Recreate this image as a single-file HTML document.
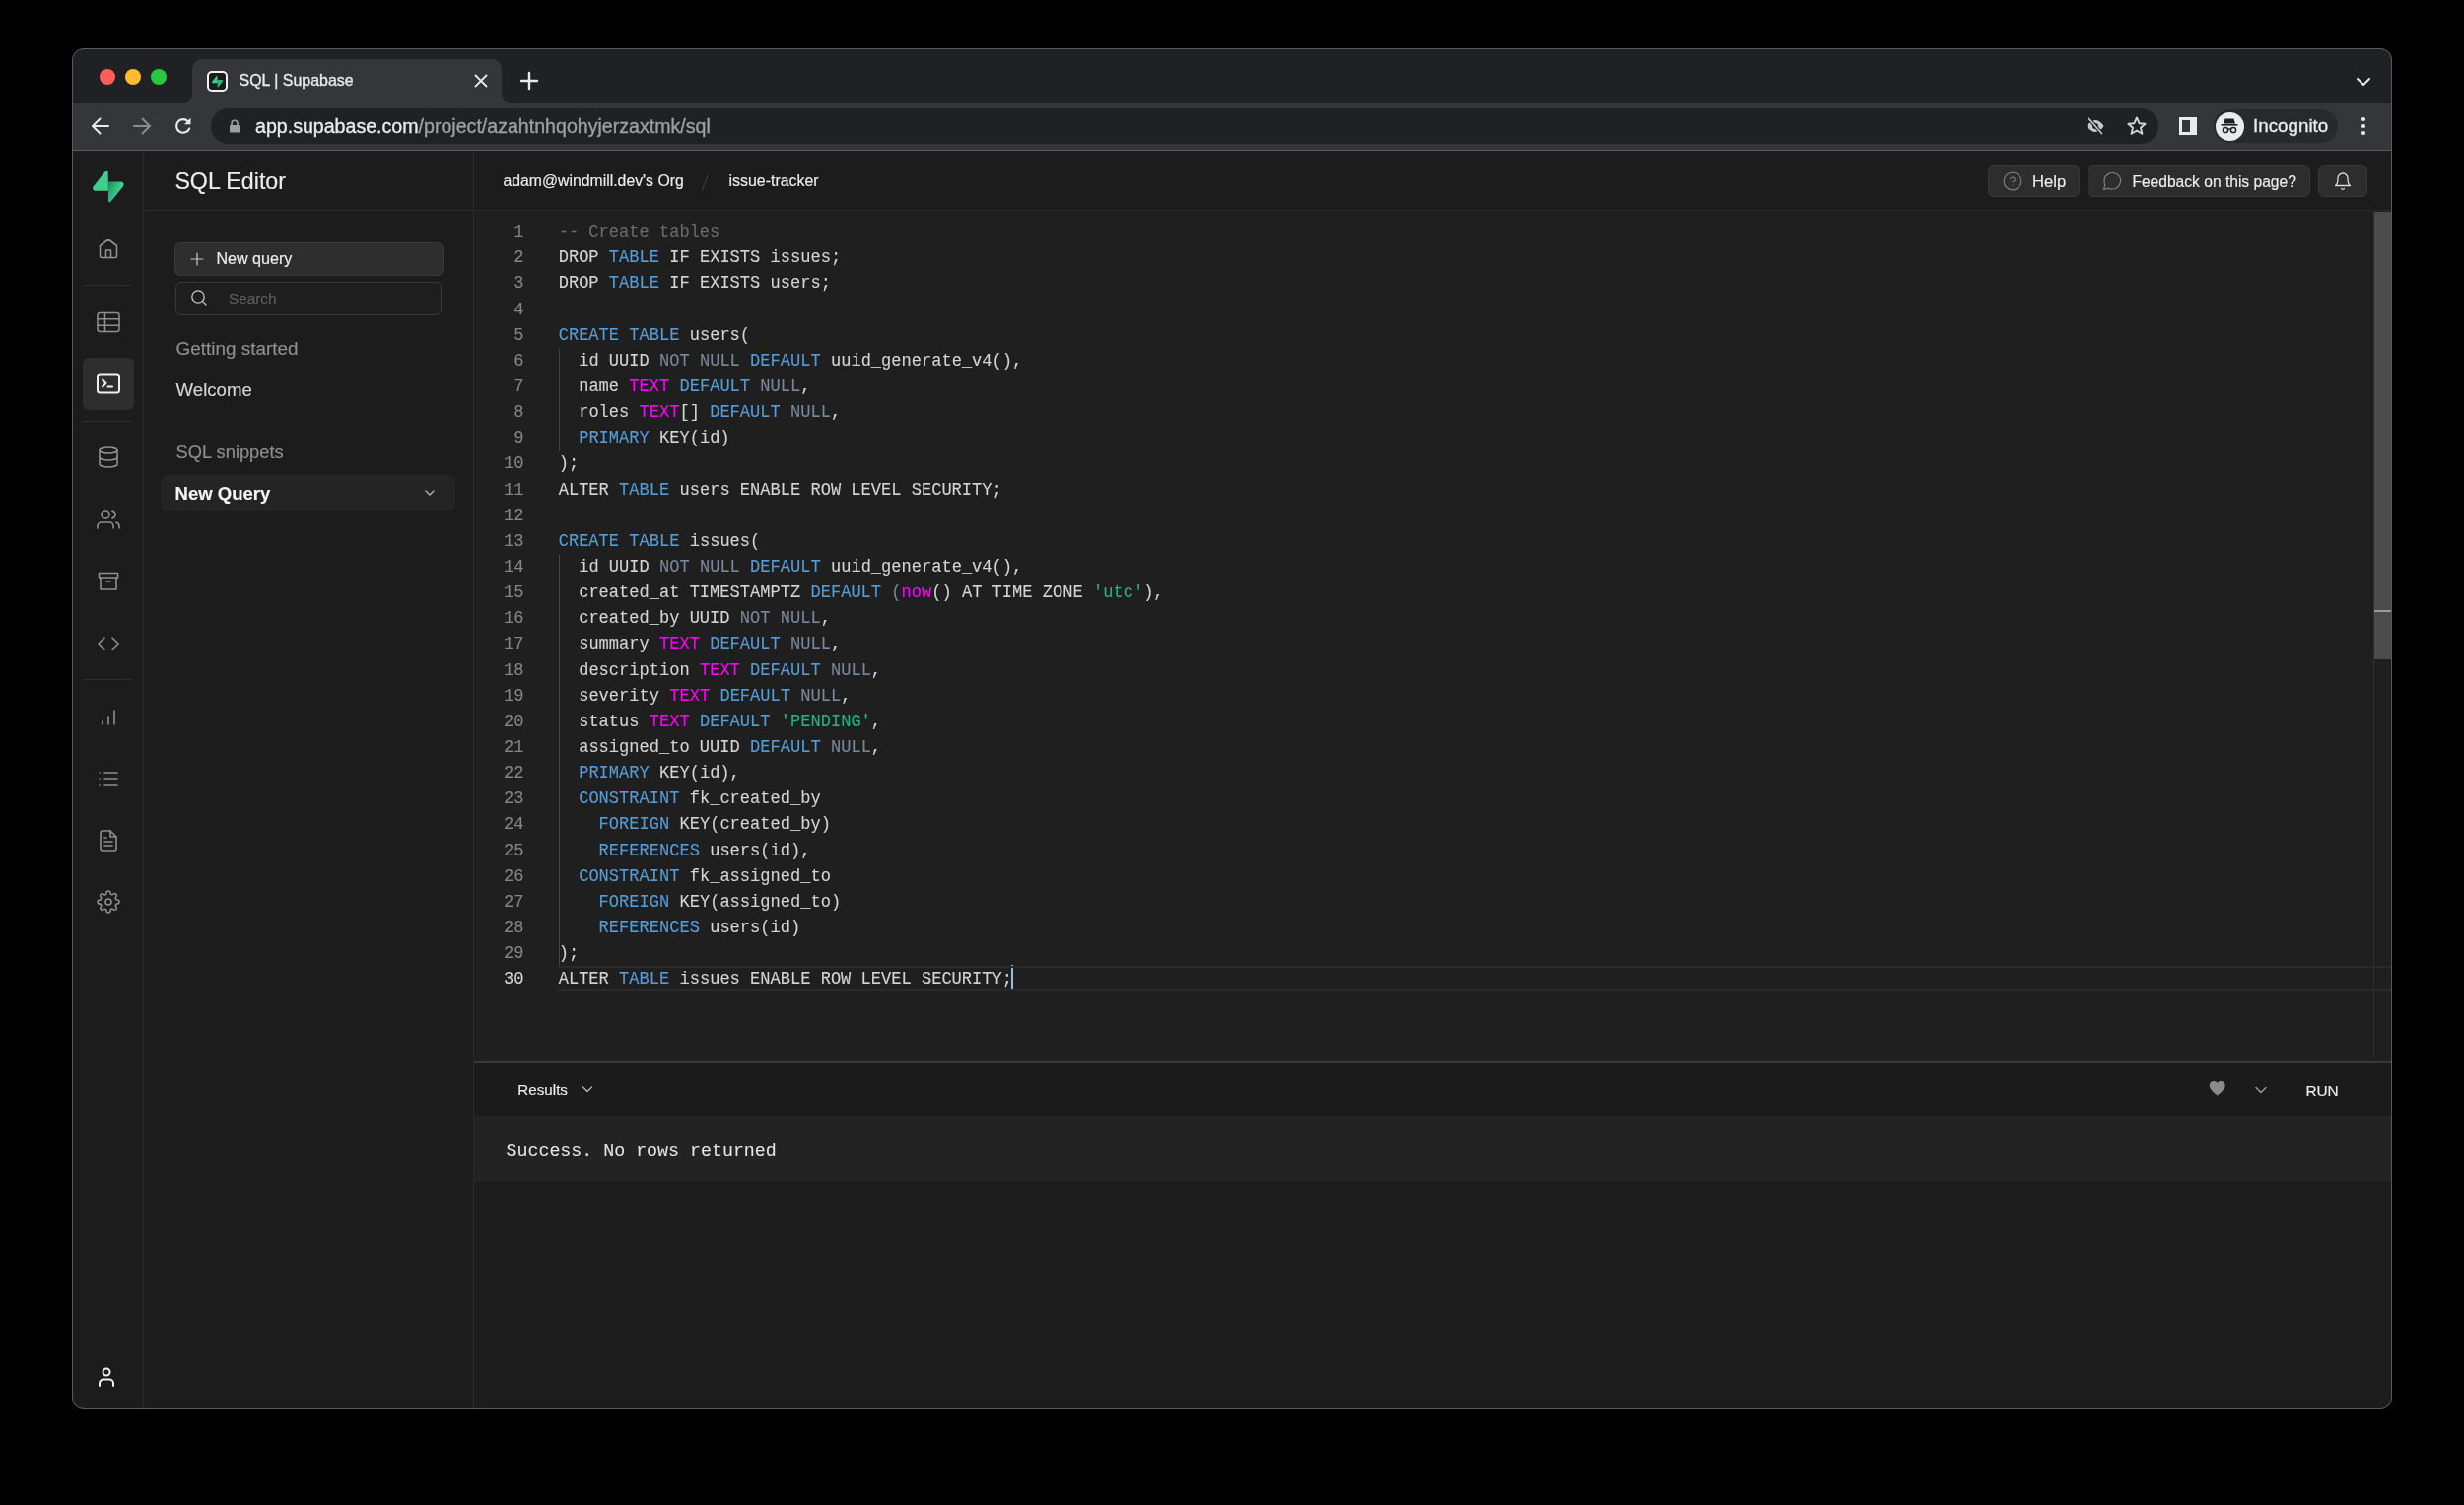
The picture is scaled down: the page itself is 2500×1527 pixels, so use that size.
<!DOCTYPE html><html><head><meta charset="utf-8"><title>SQL | Supabase</title><style>
html,body{margin:0;padding:0;background:#000;}
body{width:2500px;height:1527px;position:relative;overflow:hidden;font-family:"Liberation Sans",sans-serif;}
.a{position:absolute;}
#win{position:absolute;left:73px;top:49px;width:2354px;height:1381px;border-radius:12px;overflow:hidden;background:#1c1c1c;}
#inner{position:absolute;left:-73px;top:-49px;width:2500px;height:1527px;}
#border{position:absolute;left:73px;top:49px;width:2354px;height:1381px;border-radius:12px;box-sizing:border-box;border:1px solid #5b5b5d;}
svg{position:absolute;left:0;top:0;overflow:visible}
#txt{will-change:transform}

</style></head><body><div id="win"><div id="inner">
<div class="a" style="left:73px;top:49px;width:2354px;height:55px;background:#202124"></div>
<div class="a" style="left:195px;top:60px;width:314px;height:45px;background:#35363a;border-radius:10px 10px 0 0"></div>
<div class="a" style="left:187px;top:96px;width:8px;height:8px;background:radial-gradient(circle at 0 0, transparent 7.5px, #35363a 8px)"></div>
<div class="a" style="left:509px;top:96px;width:8px;height:8px;background:radial-gradient(circle at 100% 0, transparent 7.5px, #35363a 8px)"></div>
<div class="a" style="left:73px;top:104px;width:2354px;height:48px;background:#35363a"></div>
<div class="a" style="left:73px;top:152px;width:2354px;height:1px;background:#5a5b5e"></div>
<div class="a" style="left:214px;top:110px;width:1976px;height:36px;background:#202124;border-radius:18px"></div>
<div class="a" style="left:2246px;top:111px;width:126px;height:34px;background:#28292c;border-radius:17px"></div>
<div class="a" style="left:2247.5px;top:113.5px;width:29.0px;height:29.0px;background:#e8eaed;border-radius:50%"></div>
<div class="a" style="left:73px;top:153px;width:2354px;height:1277px;background:#1c1c1c"></div>
<div class="a" style="left:145px;top:153px;width:1px;height:1277px;background:#2a2a2a"></div>
<div class="a" style="left:480px;top:153px;width:1px;height:1277px;background:#2a2a2a"></div>
<div class="a" style="left:146px;top:213px;width:2281px;height:1px;background:#2a2a2a"></div>
<div class="a" style="left:481px;top:214px;width:1946px;height:863px;background:#1f1f1f"></div>
<div class="a" style="left:566.7px;top:353.5px;width:1.0px;height:104.55999999999995px;background:#404040"></div>
<div class="a" style="left:566.7px;top:562.62px;width:1.0px;height:418.24px;background:#444444"></div>
<div class="a" style="left:1026px;top:979px;width:2.2999999999999545px;height:26.299999999999955px;background:#a9b5c9;box-shadow:0 0 0 1px #0d2640"></div>
<div class="a" style="left:2408px;top:214px;width:19px;height:859px;background:#1f1f1f;box-shadow:inset 1px 0 0 #2f2f2f"></div>
<div class="a" style="left:2409px;top:215px;width:17px;height:454px;background:#4b4b4b"></div>
<div class="a" style="left:2409px;top:618.5px;width:17px;height:2.0px;background:#9a9a9a"></div>
<div class="a" style="left:566.4px;top:979.5px;width:1859.6px;height:25.5px;border-top:2px solid #2a2a2a;border-bottom:2px solid #2a2a2a;box-sizing:border-box"></div>
<div class="a" style="left:481px;top:1076.5px;width:1946px;height:2.5px;background:#383838"></div>
<div class="a" style="left:481px;top:1079px;width:1946px;height:53px;background:#1b1b1b"></div>
<div class="a" style="left:481px;top:1132px;width:1946px;height:67px;background:#232323"></div>
<div class="a" style="left:481px;top:1199px;width:1946px;height:231px;background:#1c1c1c"></div>
<div class="a" style="left:84px;top:363px;width:52px;height:52.60000000000002px;background:#2e2e2e;border-radius:6px"></div>
<div class="a" style="left:84px;top:289px;width:50px;height:1px;background:#2e2e2e"></div>
<div class="a" style="left:84px;top:426.5px;width:50px;height:1.0px;background:#2e2e2e"></div>
<div class="a" style="left:84px;top:689px;width:50px;height:1px;background:#2e2e2e"></div>
<div class="a" style="left:177px;top:245.7px;width:273px;height:34.0px;background:#2e2e2e;border:1px solid #3a3a3a;border-radius:6px;box-sizing:border-box"></div>
<div class="a" style="left:178px;top:286px;width:270px;height:33.60000000000002px;background:#1e1e1e;border:1px solid #3a3a3a;border-radius:6px;box-sizing:border-box"></div>
<div class="a" style="left:162.7px;top:482px;width:298.90000000000003px;height:36px;background:#242424;border-radius:6px"></div>
<div class="a" style="left:2017px;top:167px;width:93px;height:33.400000000000006px;background:#2d2d2d;border:1px solid #383838;border-radius:6px;box-sizing:border-box"></div>
<div class="a" style="left:2118.3px;top:167px;width:225.5px;height:33.400000000000006px;background:#2d2d2d;border:1px solid #383838;border-radius:6px;box-sizing:border-box"></div>
<div class="a" style="left:2352px;top:167px;width:50px;height:33.400000000000006px;background:#2d2d2d;border:1px solid #383838;border-radius:6px;box-sizing:border-box"></div>
<div class="a" style="left:100.5px;top:69.7px;width:16.0px;height:16.0px;background:#ff5f57;border-radius:50%"></div>
<div class="a" style="left:126.69999999999999px;top:69.7px;width:16.0px;height:16.0px;background:#febc2e;border-radius:50%"></div>
<div class="a" style="left:152.6px;top:69.7px;width:16.0px;height:16.0px;background:#28c840;border-radius:50%"></div>
<div class="a" style="left:210px;top:72px;width:21px;height:21px;border:2px solid #f1f1f1;border-radius:5px;box-sizing:border-box;background:#1c1c1c"></div>
<svg class="a" style="left:93.5px;top:173px;width:31.7px;height:32.6px" viewBox="0 0 109 113"><defs><linearGradient id="lg1" x1="53.97" y1="54.97" x2="94.16" y2="71.83" gradientUnits="userSpaceOnUse"><stop stop-color="#249361"/><stop offset="1" stop-color="#3ECF8E"/></linearGradient></defs><path d="M63.7076 110.284C60.8481 113.885 55.0502 111.912 54.9813 107.314L53.9738 40.0627L99.1935 40.0627C107.384 40.0627 111.952 49.5228 106.859 55.9374L63.7076 110.284Z" fill="url(#lg1)"/><path d="M45.317 2.07103C48.1765 -1.53037 53.9745 0.442937 54.0434 5.04076L54.4849 72.2922H9.83113C1.64038 72.2922 -2.92775 62.8321 2.1655 56.4175L45.317 2.07103Z" fill="#3ECF8E"/></svg>
<svg class="a" style="left:215.2px;top:76.6px;width:11.1px;height:11.5px" viewBox="0 0 109 113"><path d="M63.7076 110.284C60.8481 113.885 55.0502 111.912 54.9813 107.314L53.9738 40.0627L99.1935 40.0627C107.384 40.0627 111.952 49.5228 106.859 55.9374L63.7076 110.284Z" fill="#2fb87a"/><path d="M45.317 2.07103C48.1765 -1.53037 53.9745 0.442937 54.0434 5.04076L54.4849 72.2922H9.83113C1.64038 72.2922 -2.92775 62.8321 2.1655 56.4175L45.317 2.07103Z" fill="#3ECF8E"/></svg>
<svg class="a" style="left:98.00px;top:240.00px;width:24px;height:24px" viewBox="0 0 24 24" fill="none" stroke="#8f8f8f" stroke-width="1.6" stroke-linecap="round" stroke-linejoin="round" ><path d="M3.5 9.5l8.5-6.5 8.5 6.5v10.5a1.5 1.5 0 0 1-1.5 1.5H5a1.5 1.5 0 0 1-1.5-1.5z"/><polyline points="9.5 21.5 9.5 14 14.5 14 14.5 21.5"/></svg>
<svg class="a" style="left:97.00px;top:313.50px;width:26px;height:26px" viewBox="0 0 26 26" fill="none" stroke="#8f8f8f" stroke-width="1.5" stroke-linecap="round" stroke-linejoin="round" ><rect x="2" y="3.5" width="22" height="19" rx="2.5"/><line x1="2" y1="9.8" x2="24" y2="9.8"/><line x1="2" y1="16.2" x2="24" y2="16.2"/><line x1="9.5" y1="3.5" x2="9.5" y2="22.5"/></svg>
<svg class="a" style="left:97.00px;top:376.40px;width:26px;height:26px" viewBox="0 0 26 26" fill="none" stroke="#f0f0f0" stroke-width="2" stroke-linecap="round" stroke-linejoin="round" ><rect x="2" y="3.5" width="22" height="19" rx="2.5"/><polyline points="7 9.5 10.5 13 7 16.5"/><line x1="12.5" y1="16.5" x2="17" y2="16.5"/></svg>
<svg class="a" style="left:98.00px;top:451.80px;width:24px;height:24px" viewBox="0 0 24 24" fill="none" stroke="#8f8f8f" stroke-width="1.6" stroke-linecap="round" stroke-linejoin="round" ><ellipse cx="12" cy="5" rx="9" ry="3"/><path d="M21 12c0 1.66-4 3-9 3s-9-1.34-9-3"/><path d="M3 5v14c0 1.66 4 3 9 3s9-1.34 9-3V5"/></svg>
<svg class="a" style="left:98.00px;top:515.00px;width:24px;height:24px" viewBox="0 0 24 24" fill="none" stroke="#8f8f8f" stroke-width="1.6" stroke-linecap="round" stroke-linejoin="round" ><path d="M17 21v-2a4 4 0 0 0-4-4H5a4 4 0 0 0-4 4v2"/><circle cx="9" cy="7" r="4"/><path d="M23 21v-2a4 4 0 0 0-3-3.87"/><path d="M16 3.13a4 4 0 0 1 0 7.75"/></svg>
<svg class="a" style="left:98.00px;top:577.70px;width:24px;height:24px" viewBox="0 0 24 24" fill="none" stroke="#8f8f8f" stroke-width="1.6" stroke-linecap="round" stroke-linejoin="round" ><polyline points="20 8 20 20 4 20 4 8"/><rect x="2.5" y="3.5" width="19" height="4.5"/><line x1="10" y1="12" x2="14" y2="12"/></svg>
<svg class="a" style="left:98.00px;top:640.60px;width:24px;height:24px" viewBox="0 0 24 24" fill="none" stroke="#8f8f8f" stroke-width="1.6" stroke-linecap="round" stroke-linejoin="round" ><polyline points="16 18 22 12 16 6"/><polyline points="8 6 2 12 8 18"/></svg>
<svg class="a" style="left:98.00px;top:715.00px;width:24px;height:24px" viewBox="0 0 24 24" fill="none" stroke="#8f8f8f" stroke-width="1.6" stroke-linecap="round" stroke-linejoin="round" ><line x1="18" y1="20" x2="18" y2="6"/><line x1="12" y1="20" x2="12" y2="12"/><line x1="6" y1="20" x2="6" y2="17"/></svg>
<svg class="a" style="left:98.00px;top:777.60px;width:24px;height:24px" viewBox="0 0 24 24" fill="none" stroke="#8f8f8f" stroke-width="1.6" stroke-linecap="round" stroke-linejoin="round" ><line x1="8" y1="6" x2="21" y2="6"/><line x1="8" y1="12" x2="21" y2="12"/><line x1="8" y1="18" x2="21" y2="18"/><line x1="3" y1="6" x2="3.01" y2="6"/><line x1="3" y1="12" x2="3.01" y2="12"/><line x1="3" y1="18" x2="3.01" y2="18"/></svg>
<svg class="a" style="left:98.00px;top:840.50px;width:24px;height:24px" viewBox="0 0 24 24" fill="none" stroke="#8f8f8f" stroke-width="1.6" stroke-linecap="round" stroke-linejoin="round" ><path d="M14 2H6a2 2 0 0 0-2 2v16a2 2 0 0 0 2 2h12a2 2 0 0 0 2-2V8z"/><polyline points="14 2 14 8 20 8"/><line x1="16" y1="13" x2="8" y2="13"/><line x1="16" y1="17" x2="8" y2="17"/><polyline points="10 9 9 9 8 9"/></svg>
<svg class="a" style="left:98.00px;top:903.00px;width:24px;height:24px" viewBox="0 0 24 24" fill="none" stroke="#8f8f8f" stroke-width="1.6" stroke-linecap="round" stroke-linejoin="round" ><circle cx="12" cy="12" r="3"/><path d="M19.4 15a1.65 1.65 0 0 0 .33 1.82l.06.06a2 2 0 0 1 0 2.83 2 2 0 0 1-2.83 0l-.06-.06a1.65 1.65 0 0 0-1.82-.33 1.65 1.65 0 0 0-1 1.51V21a2 2 0 0 1-2 2 2 2 0 0 1-2-2v-.09A1.65 1.65 0 0 0 9 19.4a1.65 1.65 0 0 0-1.82.33l-.06.06a2 2 0 0 1-2.83 0 2 2 0 0 1 0-2.83l.06-.06a1.65 1.65 0 0 0 .33-1.82 1.65 1.65 0 0 0-1.51-1H3a2 2 0 0 1-2-2 2 2 0 0 1 2-2h.09A1.65 1.65 0 0 0 4.6 9a1.65 1.65 0 0 0-.33-1.82l-.06-.06a2 2 0 0 1 0-2.83 2 2 0 0 1 2.83 0l.06.06a1.65 1.65 0 0 0 1.82.33H9a1.65 1.65 0 0 0 1-1.51V3a2 2 0 0 1 2-2 2 2 0 0 1 2 2v.09a1.65 1.65 0 0 0 1 1.51 1.65 1.65 0 0 0 1.82-.33l.06-.06a2 2 0 0 1 2.83 0 2 2 0 0 1 0 2.83l-.06.06a1.65 1.65 0 0 0-.33 1.82V9a1.65 1.65 0 0 0 1.51 1H21a2 2 0 0 1 2 2 2 2 0 0 1-2 2h-.09a1.65 1.65 0 0 0-1.51 1z"/></svg>
<svg class="a" style="left:95.80px;top:1384.80px;width:26px;height:26px" viewBox="0 0 26 26" fill="none" stroke="#f0f0f0" stroke-width="2" stroke-linecap="round" stroke-linejoin="round" ><circle cx="12" cy="7" r="3.5"/><path d="M5 21v-2.5a4 4 0 0 1 4-4h6a4 4 0 0 1 4 4V21"/></svg>
<svg class="a" style="left:193.00px;top:256.00px;width:14px;height:14px" viewBox="0 0 14 14" fill="none" stroke="#c8c8c8" stroke-width="1.2" stroke-linecap="round" stroke-linejoin="round" ><line x1="7" y1="1" x2="7" y2="13"/><line x1="1" y1="7" x2="13" y2="7"/></svg>
<svg class="a" style="left:193.00px;top:293.30px;width:18px;height:18px" viewBox="0 0 18 18" fill="none" stroke="#c8c8c8" stroke-width="1.3" stroke-linecap="round" stroke-linejoin="round" ><circle cx="8" cy="8" r="6.2"/><line x1="12.6" y1="12.6" x2="16" y2="16"/></svg>
<svg class="a" style="left:430.40px;top:494.00px;width:12px;height:12px" viewBox="0 0 12 12" fill="none" stroke="#bdbdbd" stroke-width="1.2" stroke-linecap="round" stroke-linejoin="round" ><polyline points="2 4 6 8 10 4"/></svg>
<svg class="a" style="left:2031.50px;top:173.70px;width:20px;height:20px" viewBox="0 0 20 20" fill="none" stroke="#7a7a7a" stroke-width="1.2" stroke-linecap="round" stroke-linejoin="round" ><circle cx="10" cy="10" r="8.8"/><path d="M7.6 7.6a2.5 2.5 0 0 1 4.8.8c0 1.6-2.4 2.4-2.4 2.4"/><line x1="10" y1="14" x2="10.01" y2="14"/></svg>
<svg class="a" style="left:2133.00px;top:173.70px;width:20px;height:20px" viewBox="0 0 20 20" fill="none" stroke="#7f7f7f" stroke-width="1.2" stroke-linecap="round" stroke-linejoin="round" ><path d="M18.5 9.6a8.2 8.2 0 0 1-.9 3.8 8.4 8.4 0 0 1-7.5 4.6 8.2 8.2 0 0 1-3.8-.9L1.5 18.5l1.4-4.8a8.2 8.2 0 0 1-.9-3.8 8.4 8.4 0 0 1 4.6-7.5 8.2 8.2 0 0 1 3.8-.9h.5a8.4 8.4 0 0 1 7.9 7.9v.5z"/></svg>
<svg class="a" style="left:2367.00px;top:173.70px;width:20px;height:20px" viewBox="0 0 20 20" fill="none" stroke="#dcdcdc" stroke-width="1.3" stroke-linecap="round" stroke-linejoin="round" ><path d="M15 7a5 5 0 0 0-10 0c0 6-2.5 7.5-2.5 7.5h15S15 13 15 7"/><path d="M11.4 17.5a1.6 1.6 0 0 1-2.8 0"/></svg>
<svg class="a" style="left:588.50px;top:1098.40px;width:14px;height:14px" viewBox="0 0 14 14" fill="none" stroke="#bdbdbd" stroke-width="1.2" stroke-linecap="round" stroke-linejoin="round" ><polyline points="2.5 5 7 9.5 11.5 5"/></svg>
<svg class="a" style="left:2241px;top:1096px;width:17.5px;height:16px" viewBox="0 0 24 22"><path d="M12 21.5l-1.6-1.45C4.8 15 1 11.6 1 7.4 1 4 3.6 1.4 7 1.4c1.9 0 3.7.9 5 2.3 1.3-1.4 3.1-2.3 5-2.3 3.4 0 6 2.6 6 6 0 4.2-3.8 7.6-9.4 12.65z" fill="#8a8a8a"/></svg>
<svg class="a" style="left:2287.00px;top:1098.90px;width:14px;height:14px" viewBox="0 0 14 14" fill="none" stroke="#a0a0a0" stroke-width="1.3" stroke-linecap="round" stroke-linejoin="round" ><polyline points="2 4.5 7 9.5 12 4.5"/></svg>
<svg class="a" style="left:480.50px;top:75.00px;width:14px;height:14px" viewBox="0 0 14 14" fill="none" stroke="#e8eaed" stroke-width="1.8" stroke-linecap="round" stroke-linejoin="round" ><line x1="1.5" y1="1.5" x2="12.5" y2="12.5"/><line x1="12.5" y1="1.5" x2="1.5" y2="12.5"/></svg>
<svg class="a" style="left:528.40px;top:73.00px;width:18px;height:18px" viewBox="0 0 18 18" fill="none" stroke="#e8eaed" stroke-width="2.4" stroke-linecap="round" stroke-linejoin="round" ><line x1="9" y1="1" x2="9" y2="17"/><line x1="1" y1="9" x2="17" y2="9"/></svg>
<svg class="a" style="left:2390.00px;top:74.50px;width:16px;height:16px" viewBox="0 0 16 16" fill="none" stroke="#e8eaed" stroke-width="2" stroke-linecap="round" stroke-linejoin="round" ><polyline points="2 5 8 11 14 5"/></svg>
<svg class="a" style="left:91.80px;top:117.70px;width:20px;height:20px" viewBox="0 0 20 20" fill="none" stroke="#e8eaed" stroke-width="2" stroke-linecap="round" stroke-linejoin="round" stroke-linecap="butt"><line x1="18" y1="10" x2="2.5" y2="10"/><polyline points="9.5 2.5 2 10 9.5 17.5"/></svg>
<svg class="a" style="left:133.60px;top:117.70px;width:20px;height:20px" viewBox="0 0 20 20" fill="none" stroke="#8b8c8f" stroke-width="2" stroke-linecap="round" stroke-linejoin="round" stroke-linecap="butt"><line x1="2" y1="10" x2="17.5" y2="10"/><polyline points="10.5 2.5 18 10 10.5 17.5"/></svg>
<svg class="a" style="left:175.80px;top:117.70px;width:20px;height:20px" viewBox="0 0 20 20" fill="none" stroke="#e8eaed" stroke-width="2.1" stroke-linecap="round" stroke-linejoin="round" stroke-linecap="butt"><path d="M16.2 12.5A6.8 6.8 0 1 1 14.8 5.2"/><polygon points="17.5 1.8 17.5 8.3 11 8.3" fill="#e8eaed" stroke="none"/></svg>
<svg class="a" style="left:232px;top:121px;width:12px;height:14px" viewBox="0 0 12 14"><path d="M3 6V4.2a3 3 0 0 1 6 0V6" fill="none" stroke="#9aa0a6" stroke-width="1.6"/><rect x="1" y="6" width="10" height="7.5" rx="1" fill="#9aa0a6"/></svg>
<svg class="a" style="left:2115.00px;top:117.00px;width:22px;height:22px" viewBox="0 0 22 22" fill="none" stroke="#c6c7c9" stroke-width="1.8" stroke-linecap="round" stroke-linejoin="round" ><path d="M2.5 11s3.2-6 8.5-6 8.5 6 8.5 6-3.2 6-8.5 6-8.5-6-8.5-6z" fill="#c6c7c9" stroke="none"/><circle cx="11" cy="11" r="3" fill="#202124" stroke="none"/><line x1="4.5" y1="3.5" x2="17.5" y2="18.5" stroke="#202124" stroke-width="3.5"/><line x1="4.5" y1="3.5" x2="17.5" y2="18.5" stroke="#c6c7c9" stroke-width="1.7"/></svg>
<svg class="a" style="left:2156.70px;top:117.00px;width:22px;height:22px" viewBox="0 0 22 22" fill="none" stroke="#d4d5d7" stroke-width="1.9" stroke-linecap="round" stroke-linejoin="round" ><polygon points="11 2.5 13.6 8.2 19.6 8.7 15 12.7 16.4 18.7 11 15.5 5.6 18.7 7 12.7 2.4 8.7 8.4 8.2"/></svg>
<svg class="a" style="left:2211px;top:119px;width:18px;height:18px" viewBox="0 0 18 18"><rect x="1.5" y="1.5" width="15" height="15" fill="none" stroke="#e8eaed" stroke-width="3"/><rect x="11" y="1" width="6" height="16" fill="#e8eaed"/></svg>
<svg class="a" style="left:2250px;top:116px;width:24px;height:24px" viewBox="0 0 24 24"><path d="M7.5 4.5h9l1.5 5h-12z" fill="#202124"/><rect x="3.5" y="10" width="17" height="1.6" fill="#202124"/><circle cx="8" cy="16" r="2.6" fill="none" stroke="#202124" stroke-width="1.5"/><circle cx="16" cy="16" r="2.6" fill="none" stroke="#202124" stroke-width="1.5"/><path d="M10.6 15.5q1.4-1 2.8 0" fill="none" stroke="#202124" stroke-width="1.3"/></svg>
<svg class="a" style="left:2394px;top:117px;width:8px;height:22px" viewBox="0 0 8 22"><circle cx="4" cy="4" r="2.1" fill="#e8eaed"/><circle cx="4" cy="11" r="2.1" fill="#e8eaed"/><circle cx="4" cy="18" r="2.1" fill="#e8eaed"/></svg>
<svg class="a" style="left:705px;top:174px;width:20px;height:24px" viewBox="0 0 20 24"><line x1="13" y1="4" x2="7" y2="20" stroke="#3e3e3e" stroke-width="1.2"/></svg>
<svg id="txt" class="a" width="2500" height="1527" viewBox="0 0 2500 1527">
<text x="242.60" y="87.40" font-family='"Liberation Sans", sans-serif' font-weight="400" font-size="15.93" fill="#e8eaed" stroke="#e8eaed" stroke-width="0.35">SQL | Supabase</text>
<text x="2286.00" y="134.40" font-family='"Liberation Sans", sans-serif' font-weight="400" font-size="18.8" fill="#e8eaed" stroke="#e8eaed" stroke-width="0.35">Incognito</text>
<text x="177.40" y="192.00" font-family='"Liberation Sans", sans-serif' font-weight="400" font-size="23.2" fill="#ededed" stroke="#ededed" stroke-width="0.15">SQL Editor</text>
<text x="219.40" y="268.40" font-family='"Liberation Sans", sans-serif' font-weight="400" font-size="16.1" fill="#ededed" stroke="#ededed" stroke-width="0.15">New query</text>
<text x="232.00" y="308.30" font-family='"Liberation Sans", sans-serif' font-weight="400" font-size="15.3" fill="#5f5f5f" stroke="#5f5f5f" stroke-width="0.15">Search</text>
<text x="178.60" y="360.00" font-family='"Liberation Sans", sans-serif' font-weight="400" font-size="18.9" fill="#8f8f8f" stroke="#8f8f8f" stroke-width="0.15">Getting started</text>
<text x="178.60" y="401.80" font-family='"Liberation Sans", sans-serif' font-weight="400" font-size="18.6" fill="#d6d6d6" stroke="#d6d6d6" stroke-width="0.15">Welcome</text>
<text x="178.60" y="465.00" font-family='"Liberation Sans", sans-serif' font-weight="400" font-size="18.3" fill="#8f8f8f" stroke="#8f8f8f" stroke-width="0.15">SQL snippets</text>
<text x="177.60" y="506.70" font-family='"Liberation Sans", sans-serif' font-weight="700" font-size="18.5" fill="#f5f5f5" stroke="#f5f5f5" stroke-width="0.15">New Query</text>
<text x="510.50" y="189.40" font-family='"Liberation Sans", sans-serif' font-weight="400" font-size="15.8" fill="#ededed" stroke="#ededed" stroke-width="0.15">adam@windmill.dev&#x27;s Org</text>
<text x="739.60" y="189.40" font-family='"Liberation Sans", sans-serif' font-weight="400" font-size="15.9" fill="#ededed" stroke="#ededed" stroke-width="0.15">issue-tracker</text>
<text x="2062.00" y="189.90" font-family='"Liberation Sans", sans-serif' font-weight="400" font-size="16.6" fill="#ededed" stroke="#ededed" stroke-width="0.15">Help</text>
<text x="2163.40" y="189.90" font-family='"Liberation Sans", sans-serif' font-weight="400" font-size="15.6" fill="#ededed" stroke="#ededed" stroke-width="0.15">Feedback on this page?</text>
<text x="525.30" y="1111.40" font-family='"Liberation Sans", sans-serif' font-weight="400" font-size="15.2" fill="#ededed" stroke="#ededed" stroke-width="0.15">Results</text>
<text x="2339.40" y="1111.90" font-family='"Liberation Sans", sans-serif' font-weight="400" font-size="15.4" fill="#ededed" stroke="#ededed" stroke-width="0.15">RUN</text>
<text x="259.00" y="135" font-family='"Liberation Sans", sans-serif' font-size="19.6" fill="#9aa0a6" stroke="#9aa0a6" stroke-width="0.35"><tspan stroke="#e8eaed" fill="#e8eaed">app.supabase.com</tspan>/project/azahtnhqohyjerzaxtmk/sql</text>
<g font-family='"Liberation Mono", monospace' font-size="17.05" stroke-width="0.1" xml:space="preserve">
<g transform="translate(0 240.20) scale(1 1.12)">
<text x="531.5" y="0" text-anchor="end" fill="#858585" stroke="#858585">1</text>
<text x="566.70" y="0" fill="#6b6b6b" stroke="#6b6b6b">-- Create tables</text>
</g>
<g transform="translate(0 266.34) scale(1 1.12)">
<text x="531.5" y="0" text-anchor="end" fill="#858585" stroke="#858585">2</text>
<text x="566.70" y="0" fill="#d4d4d4" stroke="#d4d4d4">DROP </text>
<text x="617.86" y="0" fill="#569cd6" stroke="#569cd6">TABLE</text>
<text x="679.25" y="0" fill="#d4d4d4" stroke="#d4d4d4">IF EXISTS issues;</text>
</g>
<g transform="translate(0 292.48) scale(1 1.12)">
<text x="531.5" y="0" text-anchor="end" fill="#858585" stroke="#858585">3</text>
<text x="566.70" y="0" fill="#d4d4d4" stroke="#d4d4d4">DROP </text>
<text x="617.86" y="0" fill="#569cd6" stroke="#569cd6">TABLE</text>
<text x="679.25" y="0" fill="#d4d4d4" stroke="#d4d4d4">IF EXISTS users;</text>
</g>
<g transform="translate(0 318.62) scale(1 1.12)">
<text x="531.5" y="0" text-anchor="end" fill="#858585" stroke="#858585">4</text>
</g>
<g transform="translate(0 344.76) scale(1 1.12)">
<text x="531.5" y="0" text-anchor="end" fill="#858585" stroke="#858585">5</text>
<text x="566.70" y="0" fill="#569cd6" stroke="#569cd6">CREATE</text>
<text x="638.32" y="0" fill="#569cd6" stroke="#569cd6">TABLE</text>
<text x="699.71" y="0" fill="#d4d4d4" stroke="#d4d4d4">users(</text>
</g>
<g transform="translate(0 370.90) scale(1 1.12)">
<text x="531.5" y="0" text-anchor="end" fill="#858585" stroke="#858585">6</text>
<text x="587.16" y="0" fill="#d4d4d4" stroke="#d4d4d4">id UUID </text>
<text x="669.02" y="0" fill="#778899" stroke="#778899">NOT</text>
<text x="709.94" y="0" fill="#778899" stroke="#778899">NULL</text>
<text x="761.10" y="0" fill="#569cd6" stroke="#569cd6">DEFAULT</text>
<text x="842.95" y="0" fill="#d4d4d4" stroke="#d4d4d4">uuid_generate_v4(),</text>
</g>
<g transform="translate(0 397.04) scale(1 1.12)">
<text x="531.5" y="0" text-anchor="end" fill="#858585" stroke="#858585">7</text>
<text x="587.16" y="0" fill="#d4d4d4" stroke="#d4d4d4">name </text>
<text x="638.32" y="0" fill="#ff00ff" stroke="#ff00ff">TEXT</text>
<text x="689.48" y="0" fill="#569cd6" stroke="#569cd6">DEFAULT</text>
<text x="771.33" y="0" fill="#778899" stroke="#778899">NULL</text>
<text x="812.26" y="0" fill="#d4d4d4" stroke="#d4d4d4">,</text>
</g>
<g transform="translate(0 423.18) scale(1 1.12)">
<text x="531.5" y="0" text-anchor="end" fill="#858585" stroke="#858585">8</text>
<text x="587.16" y="0" fill="#d4d4d4" stroke="#d4d4d4">roles </text>
<text x="648.55" y="0" fill="#ff00ff" stroke="#ff00ff">TEXT</text>
<text x="689.48" y="0" fill="#d4d4d4" stroke="#d4d4d4">[] </text>
<text x="720.17" y="0" fill="#569cd6" stroke="#569cd6">DEFAULT</text>
<text x="802.03" y="0" fill="#778899" stroke="#778899">NULL</text>
<text x="842.95" y="0" fill="#d4d4d4" stroke="#d4d4d4">,</text>
</g>
<g transform="translate(0 449.32) scale(1 1.12)">
<text x="531.5" y="0" text-anchor="end" fill="#858585" stroke="#858585">9</text>
<text x="587.16" y="0" fill="#569cd6" stroke="#569cd6">PRIMARY</text>
<text x="669.02" y="0" fill="#d4d4d4" stroke="#d4d4d4">KEY(id)</text>
</g>
<g transform="translate(0 475.46) scale(1 1.12)">
<text x="531.5" y="0" text-anchor="end" fill="#858585" stroke="#858585">10</text>
<text x="566.70" y="0" fill="#d4d4d4" stroke="#d4d4d4">);</text>
</g>
<g transform="translate(0 501.60) scale(1 1.12)">
<text x="531.5" y="0" text-anchor="end" fill="#858585" stroke="#858585">11</text>
<text x="566.70" y="0" fill="#d4d4d4" stroke="#d4d4d4">ALTER </text>
<text x="628.09" y="0" fill="#569cd6" stroke="#569cd6">TABLE</text>
<text x="689.48" y="0" fill="#d4d4d4" stroke="#d4d4d4">users ENABLE ROW LEVEL SECURITY;</text>
</g>
<g transform="translate(0 527.74) scale(1 1.12)">
<text x="531.5" y="0" text-anchor="end" fill="#858585" stroke="#858585">12</text>
</g>
<g transform="translate(0 553.88) scale(1 1.12)">
<text x="531.5" y="0" text-anchor="end" fill="#858585" stroke="#858585">13</text>
<text x="566.70" y="0" fill="#569cd6" stroke="#569cd6">CREATE</text>
<text x="638.32" y="0" fill="#569cd6" stroke="#569cd6">TABLE</text>
<text x="699.71" y="0" fill="#d4d4d4" stroke="#d4d4d4">issues(</text>
</g>
<g transform="translate(0 580.02) scale(1 1.12)">
<text x="531.5" y="0" text-anchor="end" fill="#858585" stroke="#858585">14</text>
<text x="587.16" y="0" fill="#d4d4d4" stroke="#d4d4d4">id UUID </text>
<text x="669.02" y="0" fill="#778899" stroke="#778899">NOT</text>
<text x="709.94" y="0" fill="#778899" stroke="#778899">NULL</text>
<text x="761.10" y="0" fill="#569cd6" stroke="#569cd6">DEFAULT</text>
<text x="842.95" y="0" fill="#d4d4d4" stroke="#d4d4d4">uuid_generate_v4(),</text>
</g>
<g transform="translate(0 606.16) scale(1 1.12)">
<text x="531.5" y="0" text-anchor="end" fill="#858585" stroke="#858585">15</text>
<text x="587.16" y="0" fill="#d4d4d4" stroke="#d4d4d4">created_at TIMESTAMPTZ </text>
<text x="822.49" y="0" fill="#569cd6" stroke="#569cd6">DEFAULT</text>
<text x="904.34" y="0" fill="#778899" stroke="#778899">(</text>
<text x="914.58" y="0" fill="#ff00ff" stroke="#ff00ff">now</text>
<text x="945.27" y="0" fill="#d4d4d4" stroke="#d4d4d4">() AT TIME ZONE </text>
<text x="1108.98" y="0" fill="#24b47e" stroke="#24b47e">&#x27;utc&#x27;</text>
<text x="1160.14" y="0" fill="#d4d4d4" stroke="#d4d4d4">),</text>
</g>
<g transform="translate(0 632.30) scale(1 1.12)">
<text x="531.5" y="0" text-anchor="end" fill="#858585" stroke="#858585">16</text>
<text x="587.16" y="0" fill="#d4d4d4" stroke="#d4d4d4">created_by UUID </text>
<text x="750.87" y="0" fill="#778899" stroke="#778899">NOT</text>
<text x="791.80" y="0" fill="#778899" stroke="#778899">NULL</text>
<text x="832.72" y="0" fill="#d4d4d4" stroke="#d4d4d4">,</text>
</g>
<g transform="translate(0 658.44) scale(1 1.12)">
<text x="531.5" y="0" text-anchor="end" fill="#858585" stroke="#858585">17</text>
<text x="587.16" y="0" fill="#d4d4d4" stroke="#d4d4d4">summary </text>
<text x="669.02" y="0" fill="#ff00ff" stroke="#ff00ff">TEXT</text>
<text x="720.17" y="0" fill="#569cd6" stroke="#569cd6">DEFAULT</text>
<text x="802.03" y="0" fill="#778899" stroke="#778899">NULL</text>
<text x="842.95" y="0" fill="#d4d4d4" stroke="#d4d4d4">,</text>
</g>
<g transform="translate(0 684.58) scale(1 1.12)">
<text x="531.5" y="0" text-anchor="end" fill="#858585" stroke="#858585">18</text>
<text x="587.16" y="0" fill="#d4d4d4" stroke="#d4d4d4">description </text>
<text x="709.94" y="0" fill="#ff00ff" stroke="#ff00ff">TEXT</text>
<text x="761.10" y="0" fill="#569cd6" stroke="#569cd6">DEFAULT</text>
<text x="842.95" y="0" fill="#778899" stroke="#778899">NULL</text>
<text x="883.88" y="0" fill="#d4d4d4" stroke="#d4d4d4">,</text>
</g>
<g transform="translate(0 710.72) scale(1 1.12)">
<text x="531.5" y="0" text-anchor="end" fill="#858585" stroke="#858585">19</text>
<text x="587.16" y="0" fill="#d4d4d4" stroke="#d4d4d4">severity </text>
<text x="679.25" y="0" fill="#ff00ff" stroke="#ff00ff">TEXT</text>
<text x="730.41" y="0" fill="#569cd6" stroke="#569cd6">DEFAULT</text>
<text x="812.26" y="0" fill="#778899" stroke="#778899">NULL</text>
<text x="853.19" y="0" fill="#d4d4d4" stroke="#d4d4d4">,</text>
</g>
<g transform="translate(0 736.86) scale(1 1.12)">
<text x="531.5" y="0" text-anchor="end" fill="#858585" stroke="#858585">20</text>
<text x="587.16" y="0" fill="#d4d4d4" stroke="#d4d4d4">status </text>
<text x="658.78" y="0" fill="#ff00ff" stroke="#ff00ff">TEXT</text>
<text x="709.94" y="0" fill="#569cd6" stroke="#569cd6">DEFAULT</text>
<text x="791.80" y="0" fill="#24b47e" stroke="#24b47e">&#x27;PENDING&#x27;</text>
<text x="883.88" y="0" fill="#d4d4d4" stroke="#d4d4d4">,</text>
</g>
<g transform="translate(0 763.00) scale(1 1.12)">
<text x="531.5" y="0" text-anchor="end" fill="#858585" stroke="#858585">21</text>
<text x="587.16" y="0" fill="#d4d4d4" stroke="#d4d4d4">assigned_to UUID </text>
<text x="761.10" y="0" fill="#569cd6" stroke="#569cd6">DEFAULT</text>
<text x="842.95" y="0" fill="#778899" stroke="#778899">NULL</text>
<text x="883.88" y="0" fill="#d4d4d4" stroke="#d4d4d4">,</text>
</g>
<g transform="translate(0 789.14) scale(1 1.12)">
<text x="531.5" y="0" text-anchor="end" fill="#858585" stroke="#858585">22</text>
<text x="587.16" y="0" fill="#569cd6" stroke="#569cd6">PRIMARY</text>
<text x="669.02" y="0" fill="#d4d4d4" stroke="#d4d4d4">KEY(id),</text>
</g>
<g transform="translate(0 815.28) scale(1 1.12)">
<text x="531.5" y="0" text-anchor="end" fill="#858585" stroke="#858585">23</text>
<text x="587.16" y="0" fill="#569cd6" stroke="#569cd6">CONSTRAINT</text>
<text x="699.71" y="0" fill="#d4d4d4" stroke="#d4d4d4">fk_created_by</text>
</g>
<g transform="translate(0 841.42) scale(1 1.12)">
<text x="531.5" y="0" text-anchor="end" fill="#858585" stroke="#858585">24</text>
<text x="607.63" y="0" fill="#569cd6" stroke="#569cd6">FOREIGN</text>
<text x="689.48" y="0" fill="#d4d4d4" stroke="#d4d4d4">KEY(created_by)</text>
</g>
<g transform="translate(0 867.56) scale(1 1.12)">
<text x="531.5" y="0" text-anchor="end" fill="#858585" stroke="#858585">25</text>
<text x="607.63" y="0" fill="#569cd6" stroke="#569cd6">REFERENCES</text>
<text x="720.17" y="0" fill="#d4d4d4" stroke="#d4d4d4">users(id),</text>
</g>
<g transform="translate(0 893.70) scale(1 1.12)">
<text x="531.5" y="0" text-anchor="end" fill="#858585" stroke="#858585">26</text>
<text x="587.16" y="0" fill="#569cd6" stroke="#569cd6">CONSTRAINT</text>
<text x="699.71" y="0" fill="#d4d4d4" stroke="#d4d4d4">fk_assigned_to</text>
</g>
<g transform="translate(0 919.84) scale(1 1.12)">
<text x="531.5" y="0" text-anchor="end" fill="#858585" stroke="#858585">27</text>
<text x="607.63" y="0" fill="#569cd6" stroke="#569cd6">FOREIGN</text>
<text x="689.48" y="0" fill="#d4d4d4" stroke="#d4d4d4">KEY(assigned_to)</text>
</g>
<g transform="translate(0 945.98) scale(1 1.12)">
<text x="531.5" y="0" text-anchor="end" fill="#858585" stroke="#858585">28</text>
<text x="607.63" y="0" fill="#569cd6" stroke="#569cd6">REFERENCES</text>
<text x="720.17" y="0" fill="#d4d4d4" stroke="#d4d4d4">users(id)</text>
</g>
<g transform="translate(0 972.12) scale(1 1.12)">
<text x="531.5" y="0" text-anchor="end" fill="#858585" stroke="#858585">29</text>
<text x="566.70" y="0" fill="#d4d4d4" stroke="#d4d4d4">);</text>
</g>
<g transform="translate(0 998.26) scale(1 1.12)">
<text x="531.5" y="0" text-anchor="end" fill="#d6d6d6" stroke="#d6d6d6">30</text>
<text x="566.70" y="0" fill="#d4d4d4" stroke="#d4d4d4">ALTER </text>
<text x="628.09" y="0" fill="#569cd6" stroke="#569cd6">TABLE</text>
<text x="689.48" y="0" fill="#d4d4d4" stroke="#d4d4d4">issues ENABLE ROW LEVEL SECURITY;</text>
</g>
</g>
<text x="513.5" y="1173" font-family='"Liberation Mono", monospace' font-size="18.3" fill="#e6e6e6" stroke="#e6e6e6" stroke-width="0.05" xml:space="preserve">Success. No rows returned</text>
</svg>
</div></div><div id="border"></div></body></html>
